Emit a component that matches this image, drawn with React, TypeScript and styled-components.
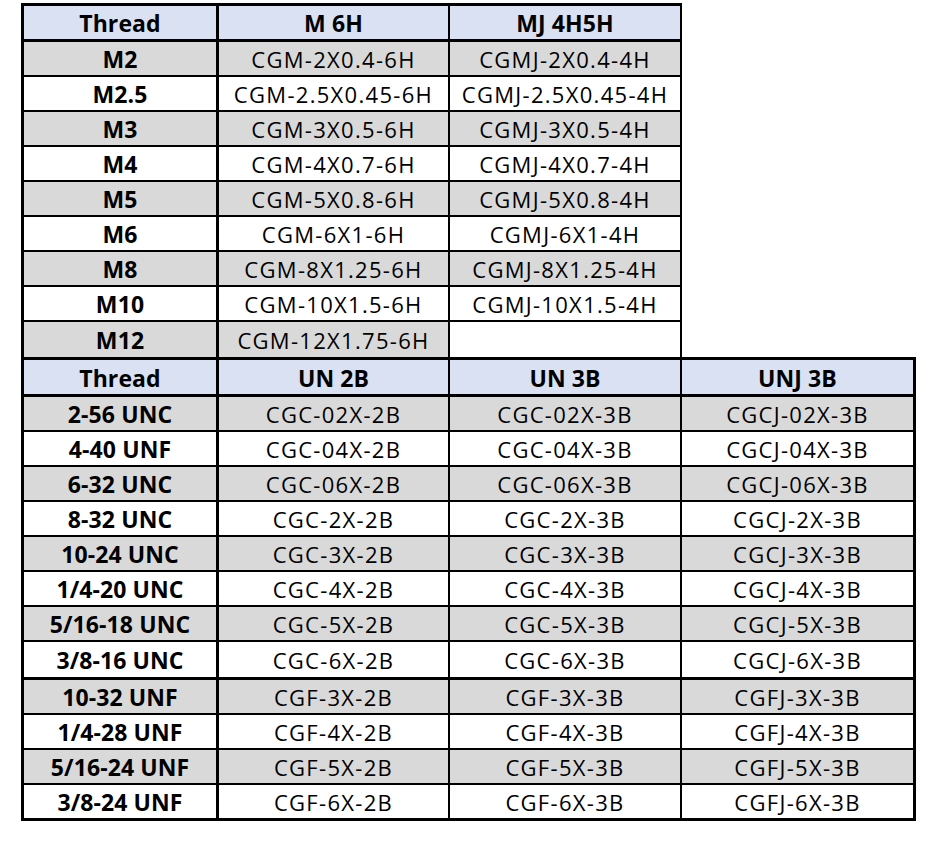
import React from 'react';
import styled, { createGlobalStyle } from 'styled-components';

const Global = createGlobalStyle`
  html, body { margin: 0; padding: 0; background: #ffffff; }
  body { font-family: "Open Sans", "Noto Sans", sans-serif; color: #000000; }
`;

type Edge = 'none' | 'thin' | 'thick';
const edgeWidth = (e: Edge) => (e === 'thick' ? '3px' : e === 'thin' ? '2px' : '0');

const Sheet = styled.div`
  display: flex;
  flex-direction: column;
  align-items: flex-start;
  padding: 3px 0 0 21px;
`;

const Table = styled.div<{ $cols: string }>`
  display: grid;
  grid-template-columns: ${(p) => p.$cols};
  border-left: 3px solid #000;
  border-top: 3px solid #000;
`;

const Cell = styled.div<{ $h: number; $bg: string; $bold?: boolean; $right: Edge; $bottom: Edge }>`
  box-sizing: border-box;
  height: ${(p) => p.$h}px;
  display: flex;
  align-items: center;
  justify-content: center;
  background: ${(p) => p.$bg};
  border-right: ${(p) => edgeWidth(p.$right)} solid #000;
  border-bottom: ${(p) => edgeWidth(p.$bottom)} solid #000;
  font-size: ${(p) => (p.$bold ? '23px' : '22px')};
  font-weight: ${(p) => (p.$bold ? 700 : 400)};
  letter-spacing: ${(p) => (p.$bold ? '0.1px' : '1.3px')};
  white-space: nowrap;
  padding-top: 1px;
`;

const BLUE = '#d9e1f2';
const GRAY = '#d9d9d9';
const WHITE = '#ffffff';

type Row = { cells: string[]; h: number; bottom: Edge; bg: string; header?: boolean };

const metricRows: string[][] = [
  ['M2', 'CGM-2X0.4-6H', 'CGMJ-2X0.4-4H'],
  ['M2.5', 'CGM-2.5X0.45-6H', 'CGMJ-2.5X0.45-4H'],
  ['M3', 'CGM-3X0.5-6H', 'CGMJ-3X0.5-4H'],
  ['M4', 'CGM-4X0.7-6H', 'CGMJ-4X0.7-4H'],
  ['M5', 'CGM-5X0.8-6H', 'CGMJ-5X0.8-4H'],
  ['M6', 'CGM-6X1-6H', 'CGMJ-6X1-4H'],
  ['M8', 'CGM-8X1.25-6H', 'CGMJ-8X1.25-4H'],
  ['M10', 'CGM-10X1.5-6H', 'CGMJ-10X1.5-4H'],
  ['M12', 'CGM-12X1.75-6H', ''],
];

const inchRows: string[][] = [
  ['2-56 UNC', 'CGC-02X-2B', 'CGC-02X-3B', 'CGCJ-02X-3B'],
  ['4-40 UNF', 'CGC-04X-2B', 'CGC-04X-3B', 'CGCJ-04X-3B'],
  ['6-32 UNC', 'CGC-06X-2B', 'CGC-06X-3B', 'CGCJ-06X-3B'],
  ['8-32 UNC', 'CGC-2X-2B', 'CGC-2X-3B', 'CGCJ-2X-3B'],
  ['10-24 UNC', 'CGC-3X-2B', 'CGC-3X-3B', 'CGCJ-3X-3B'],
  ['1/4-20 UNC', 'CGC-4X-2B', 'CGC-4X-3B', 'CGCJ-4X-3B'],
  ['5/16-18 UNC', 'CGC-5X-2B', 'CGC-5X-3B', 'CGCJ-5X-3B'],
  ['3/8-16 UNC', 'CGC-6X-2B', 'CGC-6X-3B', 'CGCJ-6X-3B'],
  ['10-32 UNF', 'CGF-3X-2B', 'CGF-3X-3B', 'CGFJ-3X-3B'],
  ['1/4-28 UNF', 'CGF-4X-2B', 'CGF-4X-3B', 'CGFJ-4X-3B'],
  ['5/16-24 UNF', 'CGF-5X-2B', 'CGF-5X-3B', 'CGFJ-5X-3B'],
  ['3/8-24 UNF', 'CGF-6X-2B', 'CGF-6X-3B', 'CGFJ-6X-3B'],
];

const topRows: Row[] = [
  { cells: ['Thread', 'M 6H', 'MJ 4H5H'], h: 36, bottom: 'thick', bg: BLUE, header: true },
  ...metricRows.map((cells, i) => ({
    cells,
    h: 35,
    bottom: (i === metricRows.length - 1 ? 'none' : 'thin') as Edge,
    bg: i % 2 === 0 ? GRAY : WHITE,
  })),
];

const bottomRows: Row[] = [
  { cells: ['Thread', 'UN 2B', 'UN 3B', 'UNJ 3B'], h: 37, bottom: 'thick', bg: BLUE, header: true },
  ...inchRows.map((cells, i) => {
    const last = i === inchRows.length - 1;
    const split = i === 7;
    return {
      cells,
      h: split ? 38 : last ? 36 : 35,
      bottom: (split || last ? 'thick' : 'thin') as Edge,
      bg: i % 2 === 0 ? GRAY : WHITE,
    };
  }),
];

function Grid({ rows, cols, rights }: { rows: Row[]; cols: string; rights: Edge[] }) {
  return (
    <Table $cols={cols}>
      {rows.map((row, r) =>
        row.cells.map((text, c) => (
          <Cell
            key={`${r}-${c}`}
            $h={row.h}
            $bg={text === '' ? WHITE : row.bg}
            $bold={row.header || c === 0}
            $right={rights[c]}
            $bottom={row.bottom}
          >
            {text}
          </Cell>
        ))
      )}
    </Table>
  );
}

export default function App() {
  return (
    <>
      <Global />
      <Sheet>
        <Grid rows={topRows} cols="195px 231px 232px" rights={['thick', 'thin', 'thin']} />
        <Grid rows={bottomRows} cols="195px 231px 232px 234px" rights={['thick', 'thin', 'thin', 'thick']} />
      </Sheet>
    </>
  );
}
